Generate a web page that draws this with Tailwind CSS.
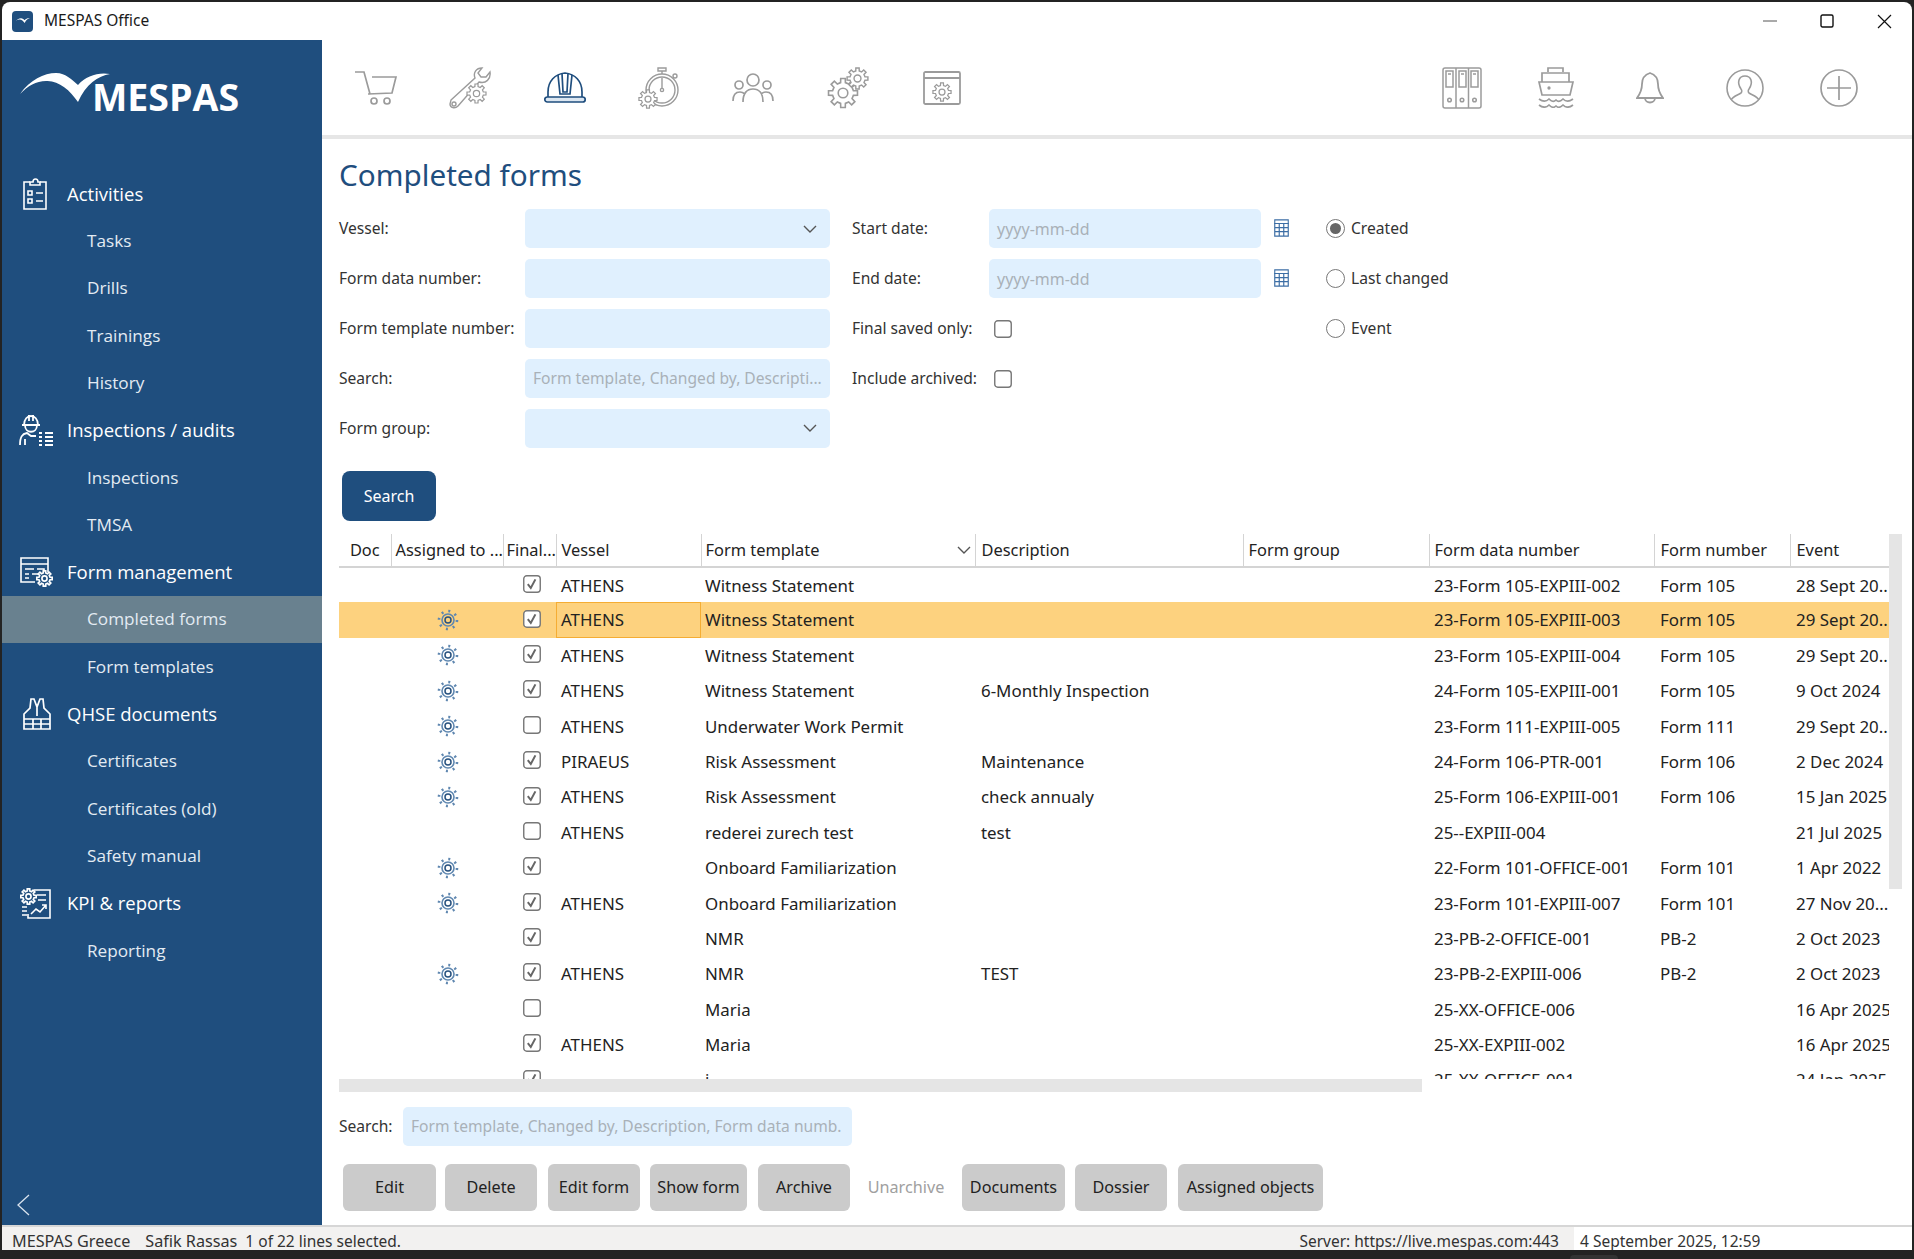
<!DOCTYPE html>
<html lang="en">
<head>
    <meta charset="UTF-8">
    <title>MESPAS Office</title>
    <script src="https://cdn.jsdelivr.net/npm/@tailwindcss/browser@4"></script>
</head>
<body class="bg-[#232323] h-[1259px] w-[1914px] overflow-hidden font-['Noto_Sans',sans-serif] text-[#222]">
    <svg class="hidden">
        <symbol id="gear" viewBox="0 0 24 24"><path d="M10.2 4.21L10.28 1.14H13.72L13.8 4.21L16.24 5.22L18.47 3.1L20.9 5.53L18.78 7.76L19.79 10.2L22.86 10.28V13.72L19.79 13.8L18.78 16.24L20.9 18.47L18.47 20.9L16.24 18.78L13.8 19.79L13.72 22.86H10.28L10.2 19.79L7.76 18.78L5.53 20.9L3.1 18.47L5.22 16.24L4.21 13.8L1.14 13.72V10.28L4.21 10.2L5.22 7.76L3.1 5.53L5.53 3.1L7.76 5.22Z"/><circle cx="12" cy="12" r="3.6"/></symbol>
        <symbol id="chk" viewBox="0 0 18 18"><rect x="0.75" y="0.75" width="16.5" height="16.5" rx="3" fill="#fff" stroke="#777" stroke-width="1.4"/><path d="M4.8 9.2l3 3.8 4.6-8.6" fill="none" stroke="#666" stroke-width="2"/></symbol>
        <symbol id="unchk" viewBox="0 0 18 18"><rect x="0.75" y="0.75" width="16.5" height="16.5" rx="3" fill="#fff" stroke="#777" stroke-width="1.4"/></symbol>
        <symbol id="sun" viewBox="0 0 22 22"><circle cx="11" cy="11" r="3" fill="none" stroke="#28527f" stroke-width="1.5"/><circle cx="11" cy="11" r="6" fill="none" stroke="#5f87b0" stroke-width="1.6"/><circle cx="11" cy="11" r="9" fill="none" stroke="#5f87b0" stroke-width="2.6" stroke-dasharray="2 5.07"/></symbol>
        <symbol id="cal" viewBox="0 0 17 20"><path d="M1 1h15v4H1z" fill="#fff" stroke="#3c6ea5" stroke-width="1.2"/><path d="M1 5h15v14H1zM1 9.5h15M1 14h15M6 5v14M11 5v14" fill="none" stroke="#3c6ea5" stroke-width="1.3"/></symbol>
        <symbol id="chev" viewBox="0 0 14 8"><path d="M1 1l6 6 6-6" fill="none" stroke="#555" stroke-width="1.4"/></symbol>
    </svg>

    <div class="pt-[2px] pl-[2px] pr-[2px] h-[1250px]">
        <div class="bg-white h-[1248px] rounded-t-lg overflow-hidden flex flex-col">
            <!-- title bar -->
            <div class="h-[38px] shrink-0 flex items-center">
                <div class="ml-[10px] w-[21px] h-[21px] rounded-[4px] bg-[#1f4e7e] flex items-center justify-center">
                    <svg viewBox="0 0 90 32" class="w-[15px]"><path d="M0 22C10 8 24 1 36 1C46 1 52 8 58 13C66 4 78 0 90 2C78 4 66 12 58 30C50 18 38 8 26 9C16 9 8 14 0 22Z" fill="#fff"/></svg>
                </div>
                <span class="ml-[11px] text-[15.5px] text-[#1a1a1a]">MESPAS Office</span>
                <div class="ml-auto flex items-center pr-[20px]">
                    <svg class="w-[14px] h-[14px]" viewBox="0 0 14 14"><path d="M0 7h14" stroke="#555" stroke-width="1"/></svg>
                    <svg class="w-[14px] h-[14px] ml-[43px]" viewBox="0 0 14 14"><rect x="1" y="1" width="12" height="12" rx="1.5" fill="none" stroke="#111" stroke-width="1.4"/></svg>
                    <svg class="w-[15px] h-[15px] ml-[43px]" viewBox="0 0 15 15"><path d="M1 1l13 13M14 1L1 14" stroke="#111" stroke-width="1.2"/></svg>
                </div>
            </div>

            <div class="flex flex-1 min-h-0">
                <!-- sidebar -->
                <aside class="w-[320px] shrink-0 bg-[#1f4e7e] text-white flex flex-col font-['Open_Sans',sans-serif]">
                    <div class="h-[130px] shrink-0 pt-[32px] pl-[18px] flex items-start">
                        <svg width="90" height="32" viewBox="0 0 90 32"><path d="M0 22C10 8 24 1 36 1C46 1 52 8 58 13C66 4 78 0 90 2C78 4 66 12 58 30C50 18 38 8 26 9C16 9 8 14 0 22Z" fill="#fff"/></svg>
                        <span class="-ml-[18px] text-[37.5px] leading-[50px] font-bold">MESPAS</span>
                    </div>
                    <nav class="text-[18.5px]">
                        <div class="h-[47.3px] flex items-center pl-[20px]">
                            <span class="w-[45px]"><svg width="26" height="32" viewBox="0 0 26 32" fill="none" stroke="#fff" stroke-width="1.6"><path d="M8 4H2v27h22V4h-6"/><path d="M8 7V4h3c0-4 5-4 5 0h2v3z"/><path d="M6 13h4v4H6zM6 21h4v4H6zM14 15h7M14 23h7"/></svg></span>
                            Activities
                        </div>
                        <div class="h-[47.3px] flex items-center pl-[85px] text-[17.2px] text-[#e3ebf3]">Tasks</div>
                        <div class="h-[47.3px] flex items-center pl-[85px] text-[17.2px] text-[#e3ebf3]">Drills</div>
                        <div class="h-[47.3px] flex items-center pl-[85px] text-[17.2px] text-[#e3ebf3]">Trainings</div>
                        <div class="h-[47.3px] flex items-center pl-[85px] text-[17.2px] text-[#e3ebf3]">History</div>
                        <div class="h-[47.3px] flex items-center pl-[17px]">
                            <span class="w-[48px]"><svg width="34" height="32" viewBox="0 0 34 32" fill="none" stroke="#fff" stroke-width="1.8"><path d="M3 11h18M5 11C5 -1 19 -1 19 11M10 1v6M14 1v6M6 11c0 9 12 9 12 0M1 31c0-8 2-11 7-12l4 3h5M6 31v-6"/><path d="M20 19h3M26 19h8M20 23h3M26 23h8M20 27h3M26 27h8M20 31h3M26 31h8" stroke-width="2"/></svg></span>
                            Inspections / audits
                        </div>
                        <div class="h-[47.3px] flex items-center pl-[85px] text-[17.2px] text-[#e3ebf3]">Inspections</div>
                        <div class="h-[47.3px] flex items-center pl-[85px] text-[17.2px] text-[#e3ebf3]">TMSA</div>
                        <div class="h-[47.3px] flex items-center pl-[17px]">
                            <span class="w-[48px]"><svg width="34" height="32" viewBox="0 0 34 32" fill="none" stroke="#fff" stroke-width="1.6"><path d="M16 26H2V2h27v14M2 8h27M6 13h9M6 18h4M13 18h6M6 22h4M18 13h7v3"/><use href="#gear" x="17" y="14" width="17" height="17" fill="#1f4e7e" stroke-width="2.4"/></svg></span>
                            Form management
                        </div>
                        <div class="h-[47.3px] flex items-center pl-[85px] text-[17.2px] text-[#e3ebf3] bg-[#69818f]">Completed forms</div>
                        <div class="h-[47.3px] flex items-center pl-[85px] text-[17.2px] text-[#e3ebf3]">Form templates</div>
                        <div class="h-[47.3px] flex items-center pl-[20px]">
                            <span class="w-[45px]"><svg width="30" height="32" viewBox="0 0 30 32" fill="none" stroke="#fff" stroke-width="1.7"><path d="M9 1h3l3 8 3-8h3l1 9 6 6v15H2V16l6-6zM15 9v9M2 21h26M2 26h26M11 21v10M19 21v10"/></svg></span>
                            QHSE documents
                        </div>
                        <div class="h-[47.3px] flex items-center pl-[85px] text-[17.2px] text-[#e3ebf3]">Certificates</div>
                        <div class="h-[47.3px] flex items-center pl-[85px] text-[17.2px] text-[#e3ebf3]">Certificates (old)</div>
                        <div class="h-[47.3px] flex items-center pl-[85px] text-[17.2px] text-[#e3ebf3]">Safety manual</div>
                        <div class="h-[47.3px] flex items-center pl-[17px]">
                            <span class="w-[48px]"><svg width="32" height="32" viewBox="0 0 32 32" fill="none" stroke="#fff" stroke-width="1.6"><path d="M15 3h16v28H9v-4M18 8h9M19 13h8M12 27l5-5 4 3 6-7M23 18h4v4M3 20h5M3 24h5M3 28h5"/><use href="#gear" x="1" y="1" width="17" height="17" fill="#1f4e7e" stroke-width="2.4"/></svg></span>
                            KPI &amp; reports
                        </div>
                        <div class="h-[47.3px] flex items-center pl-[85px] text-[17.2px] text-[#e3ebf3]">Reporting</div>
                    </nav>
                    <div class="mt-auto pl-[14px] pb-[9px]">
                        <svg width="14" height="22" viewBox="0 0 14 22" fill="none" stroke="#d9e3ee" stroke-width="1.3"><path d="M13 1L2 11l11 10"/></svg>
                    </div>
                </aside>

                <main class="flex-1 min-w-0 flex flex-col">
                    <!-- toolbar -->
                    <div class="h-[99px] shrink-0 border-b-4 border-[#e6e6e6] flex items-center pl-[7px] pr-[26px]" >
                        <div class="w-[94.3px] flex justify-center">
                            <svg width="42" height="34" viewBox="0 0 42 34" fill="none" stroke="#9b9b9b" stroke-width="1.7"><path d="M0 1h9l6 22"/><path d="M17 6h24l-4 16-24 1"/><circle cx="19" cy="30" r="3"/><circle cx="32" cy="30" r="3"/></svg>
                        </div>
                        <div class="w-[94.3px] flex justify-center">
                            <svg width="42" height="42" viewBox="0 0 42 42" fill="none" stroke="#9b9b9b" stroke-width="1.4"><path d="M2 33L26 11C24 6 27 1 33 1L29 6L32 10L37 10L41 5C42 12 37 17 30 15L9 39C6 42 1 41 1 37Z"/><circle cx="5" cy="37" r="2"/><use href="#gear" x="17" y="16" width="21" height="21" fill="#fff" stroke-width="1.4"/></svg>
                        </div>
                        <div class="w-[94.3px] flex justify-center">
                            <svg width="42" height="32" viewBox="0 0 42 32" fill="none" stroke="#1f4e7e" stroke-width="1.7"><path d="M4 25V20C4 9 11 2 21 1C31 2 38 9 38 20V25"/><path d="M14 3l2 19h10l2-19M18 1.5L19 20h4l1-18.500"/><rect x="0.8" y="25" width="40.400" height="5" rx="2.500" fill="#dbe6f1"/></svg>
                        </div>
                        <div class="w-[94.3px] flex justify-center">
                            <svg width="42" height="42" viewBox="0 0 42 42" fill="none" stroke="#9b9b9b" stroke-width="1.4"><circle cx="24" cy="23" r="16"/><circle cx="24" cy="23" r="13"/><path d="M20 1h8v3h-8zM24 4v3M24 11v10"/><circle cx="24" cy="23" r="1.6"/><circle cx="37" cy="9" r="2"/><use href="#gear" x="0" y="22" width="20" height="20" fill="#fff" stroke-width="1.500"/></svg>
                        </div>
                        <div class="w-[94.3px] flex justify-center">
                            <svg width="42" height="30" viewBox="0 0 42 30" fill="none" stroke="#9b9b9b" stroke-width="1.7"><circle cx="21" cy="7" r="6"/><circle cx="7" cy="12" r="4"/><circle cx="35" cy="12" r="4"/><path d="M11 29c0-9 4-13 10-13s10 4 10 13M1 28c0-6 3-9 7-9 2 0 3 .5 5 2M41 28c0-6-3-9-7-9-2 0-3 .5-5 2"/></svg>
                        </div>
                        <div class="w-[94.3px] flex justify-center">
                            <svg width="42" height="42" viewBox="0 0 42 42" fill="none" stroke="#9b9b9b" stroke-width="1.5"><use href="#gear" x="0" y="10" width="32" height="32" fill="#fff" stroke-width="1.200"/><use href="#gear" x="19" y="0" width="23" height="23" fill="#fff" stroke-width="1.500"/></svg>
                        </div>
                        <div class="w-[94.3px] flex justify-center">
                            <svg width="38" height="34" viewBox="0 0 38 34" fill="none" stroke="#9b9b9b" stroke-width="1.8"><rect x="1" y="1" width="36" height="32" rx="1.500"/><path d="M1 7h36"/><use href="#gear" x="9" y="11" width="20" height="20" stroke-width="1.500"/></svg>
                        </div>
                        <div class="ml-auto flex items-center">
                            <div class="w-[94.3px] flex justify-center">
                                <svg width="40" height="42" viewBox="0 0 40 42" fill="none" stroke="#9b9b9b" stroke-width="1.5"><rect x="1" y="1" width="38" height="40" rx="2"/><path d="M14 1v40M26.500 1v40"/><path d="M4 4h7v16H4zM17 4h7v16h-7zM29 4h7v16h-7zM6 7h3M19 7h3M31 7h3"/><circle cx="7.500" cy="33" r="1.800"/><circle cx="20" cy="33" r="1.800"/><circle cx="32.500" cy="33" r="1.800"/></svg>
                            </div>
                            <div class="w-[94.3px] flex justify-center">
                                <svg width="36" height="41" viewBox="0 0 36 41" fill="none" stroke="#9b9b9b" stroke-width="1.7"><path d="M10 5V1h15v4M4 15V6h27v9M1 15h34l-3 13H4z"/><circle cx="11" cy="21" r=".8"/><path d="M1 32c4 3 7 3 10 0 3 3 5 3 7 1 2 2 4 2 7-1 3 3 6 3 10 0M1 38c4 3 7 3 10 0 3 3 5 3 7 1 2 2 4 2 7-1 3 3 6 3 10 0"/></svg>
                            </div>
                            <div class="w-[94.3px] flex justify-center">
                                <svg width="28" height="32" viewBox="0 0 28 32" fill="none" stroke="#9b9b9b" stroke-width="1.800"><path d="M14 1c-6 2-8 6-8 11 0 6-2 10-5 14h26c-3-4-5-8-5-14 0-5-2-9-8-11zM9 26c0 6 10 6 10 0"/></svg>
                            </div>
                            <div class="w-[94.3px] flex justify-center">
                                <svg width="38" height="38" viewBox="0 0 38 38" fill="none" stroke="#9b9b9b" stroke-width="1.600"><circle cx="19" cy="19" r="18"/><path d="M5 31c2-4 7-5 10-7 1-1 1-3 0-4-2-3-3-6-2-9 1-3 3-4 6-4s5 1 6 4c1 3 0 6-2 9-1 1-1 3 0 4 3 2 8 3 10 7"/></svg>
                            </div>
                            <div class="w-[94.3px] flex justify-center">
                                <svg width="38" height="38" viewBox="0 0 38 38" fill="none" stroke="#9b9b9b" stroke-width="1.700"><circle cx="19" cy="19" r="18"/><path d="M19 7v24M7 19h24"/></svg>
                            </div>
                        </div>
                    </div>

                    <div class="pl-[17px] flex-1 min-h-0 flex flex-col">
                        <h1 class="h-[70px] shrink-0 flex items-center text-[29.7px] text-[#1f4e7e] pt-[3px]">Completed forms</h1>

                        <!-- filter form -->
                        <div class="flex text-[15.6px] text-[#333] h-[239px] shrink-0">
                            <div class="w-[491px] grid grid-rows-5 grid-cols-[186px_305px] gap-y-[10.750px]">
                                <div class="flex items-center pt-[1px]">Vessel:</div>
                                <div class="bg-[#e0f0fe] rounded-[5px] h-[39px] flex items-center justify-end pr-[13px]"><svg class="w-[14px] h-[8px]"><use href="#chev"/></svg></div>
                                <div class="flex items-center pt-[1px]">Form data number:</div>
                                <div class="bg-[#e0f0fe] rounded-[5px] h-[39px]"></div>
                                <div class="flex items-center pt-[1px]">Form template number:</div>
                                <div class="bg-[#e0f0fe] rounded-[5px] h-[39px]"></div>
                                <div class="flex items-center pt-[1px]">Search:</div>
                                <div class="bg-[#e0f0fe] rounded-[5px] h-[39px] flex items-center pl-[8px] text-[#a9b1b8] whitespace-nowrap overflow-hidden">Form template, Changed by, Descripti...</div>
                                <div class="flex items-center pt-[1px]">Form group:</div>
                                <div class="bg-[#e0f0fe] rounded-[5px] h-[39px] flex items-center justify-end pr-[13px]"><svg class="w-[14px] h-[8px]"><use href="#chev"/></svg></div>
                            </div>
                            <div class="ml-[22px] w-[438px] grid grid-rows-5 grid-cols-[137px_272px_29px] gap-y-[10.750px] items-center">
                                <div class="pt-[1px]">Start date:</div>
                                <div class="bg-[#e0f0fe] rounded-[5px] h-[39px] flex items-center pl-[8px] text-[16px] text-[#a9b1b8]">yyyy-mm-dd</div>
                                <svg class="w-[17px] h-[18px] ml-[12px] -mt-[2px]"><use href="#cal"/></svg>
                                <div class="pt-[1px]">End date:</div>
                                <div class="bg-[#e0f0fe] rounded-[5px] h-[39px] flex items-center pl-[8px] text-[16px] text-[#a9b1b8]">yyyy-mm-dd</div>
                                <svg class="w-[17px] h-[18px] ml-[12px] -mt-[2px]"><use href="#cal"/></svg>
                                <div class="pt-[1px]">Final saved only:</div>
                                <svg class="w-[18px] h-[18px] ml-[5px] mt-[1px]"><use href="#unchk"/></svg>
                                <div></div>
                                <div class="pt-[1px]">Include archived:</div>
                                <svg class="w-[18px] h-[18px] ml-[5px] mt-[1px]"><use href="#unchk"/></svg>
                                <div></div>
                            </div>
                            <div class="ml-[36px] h-[139px] grid grid-rows-3 gap-y-[10.750px] items-center">
                                <div class="flex items-center gap-[6px]"><span class="shrink-0 w-[19px] h-[19px] rounded-full border-[1.5px] border-[#777] flex items-center justify-center"><span class="w-[11px] h-[11px] rounded-full bg-[#666]"></span></span>Created</div>
                                <div class="flex items-center gap-[6px]"><span class="shrink-0 w-[19px] h-[19px] rounded-full border-[1.5px] border-[#777]"></span>Last changed</div>
                                <div class="flex items-center gap-[6px]"><span class="shrink-0 w-[19px] h-[19px] rounded-full border-[1.5px] border-[#777]"></span>Event</div>
                            </div>
                        </div>

                        <button class="mt-[23px] ml-[3px] w-[94px] h-[50px] shrink-0 rounded-[8px] bg-[#1f4e7e] text-white text-[16px]">Search</button>

                        <!-- results -->
                        <div class="mt-[13px] flex items-start shrink-0 h-[545px]">
                            <div class="w-[1550px] h-[545px] overflow-hidden">
                                <table class="w-[1550px] table-fixed text-[16.9px] whitespace-nowrap">
                                    <colgroup>
                                        <col class="w-[52px]"><col class="w-[112px]"><col class="w-[53px]"><col class="w-[145px]"><col class="w-[274px]"><col class="w-[268px]"><col class="w-[186px]"><col class="w-[225px]"><col class="w-[136px]"><col class="w-[99px]">
                                    </colgroup>
                                    <thead class="text-[16.4px]">
                                        <tr class="h-[33px] text-left">
                                            <th class="font-normal text-center border-r border-b-2 border-[#d4d4d4] overflow-hidden">Doc</th>
                                            <th class="font-normal pl-[4px] border-r border-b-2 border-[#d4d4d4] overflow-hidden">Assigned to ...</th>
                                            <th class="font-normal pl-[3px] border-r border-b-2 border-[#d4d4d4] overflow-hidden">Final...</th>
                                            <th class="font-normal pl-[5px] border-r border-b-2 border-[#d4d4d4] overflow-hidden">Vessel</th>
                                            <th class="font-normal pl-[4px] border-r border-b-2 border-[#d4d4d4] overflow-hidden"><div class="flex items-center justify-between pr-[4px]">Form template<svg class="w-[14px] h-[8px]"><use href="#chev"/></svg></div></th>
                                            <th class="font-normal pl-[6px] border-r border-b-2 border-[#d4d4d4] overflow-hidden">Description</th>
                                            <th class="font-normal pl-[5px] border-r border-b-2 border-[#d4d4d4] overflow-hidden">Form group</th>
                                            <th class="font-normal pl-[5px] border-r border-b-2 border-[#d4d4d4] overflow-hidden">Form data number</th>
                                            <th class="font-normal pl-[6px] border-r border-b-2 border-[#d4d4d4] overflow-hidden">Form number</th>
                                            <th class="font-normal pl-[6px] border-b-2 border-[#d4d4d4] overflow-hidden">Event</th>
                                        </tr>
                                    </thead>
                                    <tbody>
                                        <tr class="h-[35.4px]">
                                            <td></td><td></td>
                                            <td><svg class="w-[18px] h-[18px] ml-[20px] -mt-[3px]"><use href="#chk"/></svg></td>
                                            <td class="pl-[5px] overflow-hidden">ATHENS</td><td class="pl-[4px] overflow-hidden">Witness Statement</td><td class="pl-[6px] overflow-hidden"></td><td></td>
                                            <td class="pl-[5px] overflow-hidden">23-Form 105-EXPIII-002</td><td class="pl-[6px] overflow-hidden">Form 105</td><td class="pl-[6px] overflow-hidden">28 Sept 20..</td>
                                        </tr>
                                        <tr class="h-[35.4px] bg-[#fdd27f]">
                                            <td></td><td><svg class="w-[22px] h-[22px] ml-[46px]"><use href="#sun"/></svg></td>
                                            <td><svg class="w-[18px] h-[18px] ml-[20px] -mt-[3px]"><use href="#chk"/></svg></td>
                                            <td class="pl-[5px] overflow-hidden outline outline-1 -outline-offset-1 outline-[#f5ad33]">ATHENS</td><td class="pl-[4px] overflow-hidden">Witness Statement</td><td class="pl-[6px] overflow-hidden"></td><td></td>
                                            <td class="pl-[5px] overflow-hidden">23-Form 105-EXPIII-003</td><td class="pl-[6px] overflow-hidden">Form 105</td><td class="pl-[6px] overflow-hidden">29 Sept 20..</td>
                                        </tr>
                                        <tr class="h-[35.4px]">
                                            <td></td><td><svg class="w-[22px] h-[22px] ml-[46px]"><use href="#sun"/></svg></td>
                                            <td><svg class="w-[18px] h-[18px] ml-[20px] -mt-[3px]"><use href="#chk"/></svg></td>
                                            <td class="pl-[5px] overflow-hidden">ATHENS</td><td class="pl-[4px] overflow-hidden">Witness Statement</td><td class="pl-[6px] overflow-hidden"></td><td></td>
                                            <td class="pl-[5px] overflow-hidden">23-Form 105-EXPIII-004</td><td class="pl-[6px] overflow-hidden">Form 105</td><td class="pl-[6px] overflow-hidden">29 Sept 20..</td>
                                        </tr>
                                        <tr class="h-[35.4px]">
                                            <td></td><td><svg class="w-[22px] h-[22px] ml-[46px]"><use href="#sun"/></svg></td>
                                            <td><svg class="w-[18px] h-[18px] ml-[20px] -mt-[3px]"><use href="#chk"/></svg></td>
                                            <td class="pl-[5px] overflow-hidden">ATHENS</td><td class="pl-[4px] overflow-hidden">Witness Statement</td><td class="pl-[6px] overflow-hidden">6-Monthly Inspection</td><td></td>
                                            <td class="pl-[5px] overflow-hidden">24-Form 105-EXPIII-001</td><td class="pl-[6px] overflow-hidden">Form 105</td><td class="pl-[6px] overflow-hidden">9 Oct 2024</td>
                                        </tr>
                                        <tr class="h-[35.4px]">
                                            <td></td><td><svg class="w-[22px] h-[22px] ml-[46px]"><use href="#sun"/></svg></td>
                                            <td><svg class="w-[18px] h-[18px] ml-[20px] -mt-[3px]"><use href="#unchk"/></svg></td>
                                            <td class="pl-[5px] overflow-hidden">ATHENS</td><td class="pl-[4px] overflow-hidden">Underwater Work Permit</td><td class="pl-[6px] overflow-hidden"></td><td></td>
                                            <td class="pl-[5px] overflow-hidden">23-Form 111-EXPIII-005</td><td class="pl-[6px] overflow-hidden">Form 111</td><td class="pl-[6px] overflow-hidden">29 Sept 20..</td>
                                        </tr>
                                        <tr class="h-[35.4px]">
                                            <td></td><td><svg class="w-[22px] h-[22px] ml-[46px]"><use href="#sun"/></svg></td>
                                            <td><svg class="w-[18px] h-[18px] ml-[20px] -mt-[3px]"><use href="#chk"/></svg></td>
                                            <td class="pl-[5px] overflow-hidden">PIRAEUS</td><td class="pl-[4px] overflow-hidden">Risk Assessment</td><td class="pl-[6px] overflow-hidden">Maintenance</td><td></td>
                                            <td class="pl-[5px] overflow-hidden">24-Form 106-PTR-001</td><td class="pl-[6px] overflow-hidden">Form 106</td><td class="pl-[6px] overflow-hidden">2 Dec 2024</td>
                                        </tr>
                                        <tr class="h-[35.4px]">
                                            <td></td><td><svg class="w-[22px] h-[22px] ml-[46px]"><use href="#sun"/></svg></td>
                                            <td><svg class="w-[18px] h-[18px] ml-[20px] -mt-[3px]"><use href="#chk"/></svg></td>
                                            <td class="pl-[5px] overflow-hidden">ATHENS</td><td class="pl-[4px] overflow-hidden">Risk Assessment</td><td class="pl-[6px] overflow-hidden">check annualy</td><td></td>
                                            <td class="pl-[5px] overflow-hidden">25-Form 106-EXPIII-001</td><td class="pl-[6px] overflow-hidden">Form 106</td><td class="pl-[6px] overflow-hidden">15 Jan 2025</td>
                                        </tr>
                                        <tr class="h-[35.4px]">
                                            <td></td><td></td>
                                            <td><svg class="w-[18px] h-[18px] ml-[20px] -mt-[3px]"><use href="#unchk"/></svg></td>
                                            <td class="pl-[5px] overflow-hidden">ATHENS</td><td class="pl-[4px] overflow-hidden">rederei zurech test</td><td class="pl-[6px] overflow-hidden">test</td><td></td>
                                            <td class="pl-[5px] overflow-hidden">25--EXPIII-004</td><td class="pl-[6px] overflow-hidden"></td><td class="pl-[6px] overflow-hidden">21 Jul 2025</td>
                                        </tr>
                                        <tr class="h-[35.4px]">
                                            <td></td><td><svg class="w-[22px] h-[22px] ml-[46px]"><use href="#sun"/></svg></td>
                                            <td><svg class="w-[18px] h-[18px] ml-[20px] -mt-[3px]"><use href="#chk"/></svg></td>
                                            <td class="pl-[5px] overflow-hidden"></td><td class="pl-[4px] overflow-hidden">Onboard Familiarization</td><td class="pl-[6px] overflow-hidden"></td><td></td>
                                            <td class="pl-[5px] overflow-hidden">22-Form 101-OFFICE-001</td><td class="pl-[6px] overflow-hidden">Form 101</td><td class="pl-[6px] overflow-hidden">1 Apr 2022</td>
                                        </tr>
                                        <tr class="h-[35.4px]">
                                            <td></td><td><svg class="w-[22px] h-[22px] ml-[46px]"><use href="#sun"/></svg></td>
                                            <td><svg class="w-[18px] h-[18px] ml-[20px] -mt-[3px]"><use href="#chk"/></svg></td>
                                            <td class="pl-[5px] overflow-hidden">ATHENS</td><td class="pl-[4px] overflow-hidden">Onboard Familiarization</td><td class="pl-[6px] overflow-hidden"></td><td></td>
                                            <td class="pl-[5px] overflow-hidden">23-Form 101-EXPIII-007</td><td class="pl-[6px] overflow-hidden">Form 101</td><td class="pl-[6px] overflow-hidden">27 Nov 20...</td>
                                        </tr>
                                        <tr class="h-[35.4px]">
                                            <td></td><td></td>
                                            <td><svg class="w-[18px] h-[18px] ml-[20px] -mt-[3px]"><use href="#chk"/></svg></td>
                                            <td class="pl-[5px] overflow-hidden"></td><td class="pl-[4px] overflow-hidden">NMR</td><td class="pl-[6px] overflow-hidden"></td><td></td>
                                            <td class="pl-[5px] overflow-hidden">23-PB-2-OFFICE-001</td><td class="pl-[6px] overflow-hidden">PB-2</td><td class="pl-[6px] overflow-hidden">2 Oct 2023</td>
                                        </tr>
                                        <tr class="h-[35.4px]">
                                            <td></td><td><svg class="w-[22px] h-[22px] ml-[46px]"><use href="#sun"/></svg></td>
                                            <td><svg class="w-[18px] h-[18px] ml-[20px] -mt-[3px]"><use href="#chk"/></svg></td>
                                            <td class="pl-[5px] overflow-hidden">ATHENS</td><td class="pl-[4px] overflow-hidden">NMR</td><td class="pl-[6px] overflow-hidden">TEST</td><td></td>
                                            <td class="pl-[5px] overflow-hidden">23-PB-2-EXPIII-006</td><td class="pl-[6px] overflow-hidden">PB-2</td><td class="pl-[6px] overflow-hidden">2 Oct 2023</td>
                                        </tr>
                                        <tr class="h-[35.4px]">
                                            <td></td><td></td>
                                            <td><svg class="w-[18px] h-[18px] ml-[20px] -mt-[3px]"><use href="#unchk"/></svg></td>
                                            <td class="pl-[5px] overflow-hidden"></td><td class="pl-[4px] overflow-hidden">Maria</td><td class="pl-[6px] overflow-hidden"></td><td></td>
                                            <td class="pl-[5px] overflow-hidden">25-XX-OFFICE-006</td><td class="pl-[6px] overflow-hidden"></td><td class="pl-[6px] overflow-hidden">16 Apr 2025</td>
                                        </tr>
                                        <tr class="h-[35.4px]">
                                            <td></td><td></td>
                                            <td><svg class="w-[18px] h-[18px] ml-[20px] -mt-[3px]"><use href="#chk"/></svg></td>
                                            <td class="pl-[5px] overflow-hidden">ATHENS</td><td class="pl-[4px] overflow-hidden">Maria</td><td class="pl-[6px] overflow-hidden"></td><td></td>
                                            <td class="pl-[5px] overflow-hidden">25-XX-EXPIII-002</td><td class="pl-[6px] overflow-hidden"></td><td class="pl-[6px] overflow-hidden">16 Apr 2025</td>
                                        </tr>
                                        <tr class="h-[35.4px]">
                                            <td></td><td></td>
                                            <td><svg class="w-[18px] h-[18px] ml-[20px] -mt-[3px]"><use href="#chk"/></svg></td>
                                            <td class="pl-[5px] overflow-hidden"></td><td class="pl-[4px] overflow-hidden">i</td><td class="pl-[6px] overflow-hidden"></td><td></td>
                                            <td class="pl-[5px] overflow-hidden">25-XX-OFFICE-001</td><td class="pl-[6px] overflow-hidden"></td><td class="pl-[6px] overflow-hidden">24 Jan 2025</td>
                                        </tr>
                                    </tbody>
                                </table>
                            </div>
                            <div class="w-[13px] h-[355px] bg-[#e5e5e5]"></div>
                        </div>
                        <div class="w-[1083px] h-[13px] shrink-0 bg-[#e5e5e5]"></div>

                        <div class="mt-[15px] flex items-center text-[15.6px] text-[#333] shrink-0">
                            <span class="w-[64px]">Search:</span>
                            <div class="w-[449px] h-[39px] bg-[#e0f0fe] rounded-[5px] flex items-center pl-[8px] text-[#a9b1b8] whitespace-nowrap overflow-hidden">Form template, Changed by, Description, Form data numb.</div>
                        </div>

                        <div class="mt-[18px] ml-[4px] flex items-center text-[16.2px] shrink-0 h-[47px]">
                            <button class="w-[93px] h-full rounded-[6px] bg-[#cbcbcb]">Edit</button>
                            <button class="ml-[9px] w-[92px] h-full rounded-[6px] bg-[#cbcbcb]">Delete</button>
                            <button class="ml-[11px] w-[92px] h-full rounded-[6px] bg-[#cbcbcb]">Edit form</button>
                            <button class="ml-[10px] w-[97px] h-full rounded-[6px] bg-[#cbcbcb]">Show form</button>
                            <button class="ml-[11px] w-[92px] h-full rounded-[6px] bg-[#cbcbcb]">Archive</button>
                            <span class="w-[112px] text-center text-[#a0a0a0]">Unarchive</span>
                            <button class="w-[103px] h-full rounded-[6px] bg-[#cbcbcb]">Documents</button>
                            <button class="ml-[10px] w-[92px] h-full rounded-[6px] bg-[#cbcbcb]">Dossier</button>
                            <button class="ml-[11px] w-[145px] h-full rounded-[6px] bg-[#cbcbcb]">Assigned objects</button>
                        </div>
                    </div>
                </main>
            </div>

            <!-- status bar -->
            <div class="h-[25px] shrink-0 border-t-2 border-[#d6d6d6] flex text-[15.5px] text-[#333] leading-[29px]">
                <div class="w-[1572px] bg-[#f2f1f0] flex pl-[10px] whitespace-nowrap">
                    <span class="text-[16.2px]">MESPAS Greece</span>
                    <span class="ml-[15px] text-[16.2px]">Safik Rassas</span>
                    <span class="ml-[8px] text-[15.5px]">1 of 22 lines selected.</span>
                    <span class="ml-auto pr-[15px]">Server: https://live.mespas.com:443</span>
                </div>
                <div class="pl-[6px]">4 September 2025, 12:59</div>
            </div>
        </div>
    </div>
    <div class="ml-[1570px] mt-[5px] w-[48px] h-[4px] rounded-t bg-[#333]"></div>
</body>
</html>
